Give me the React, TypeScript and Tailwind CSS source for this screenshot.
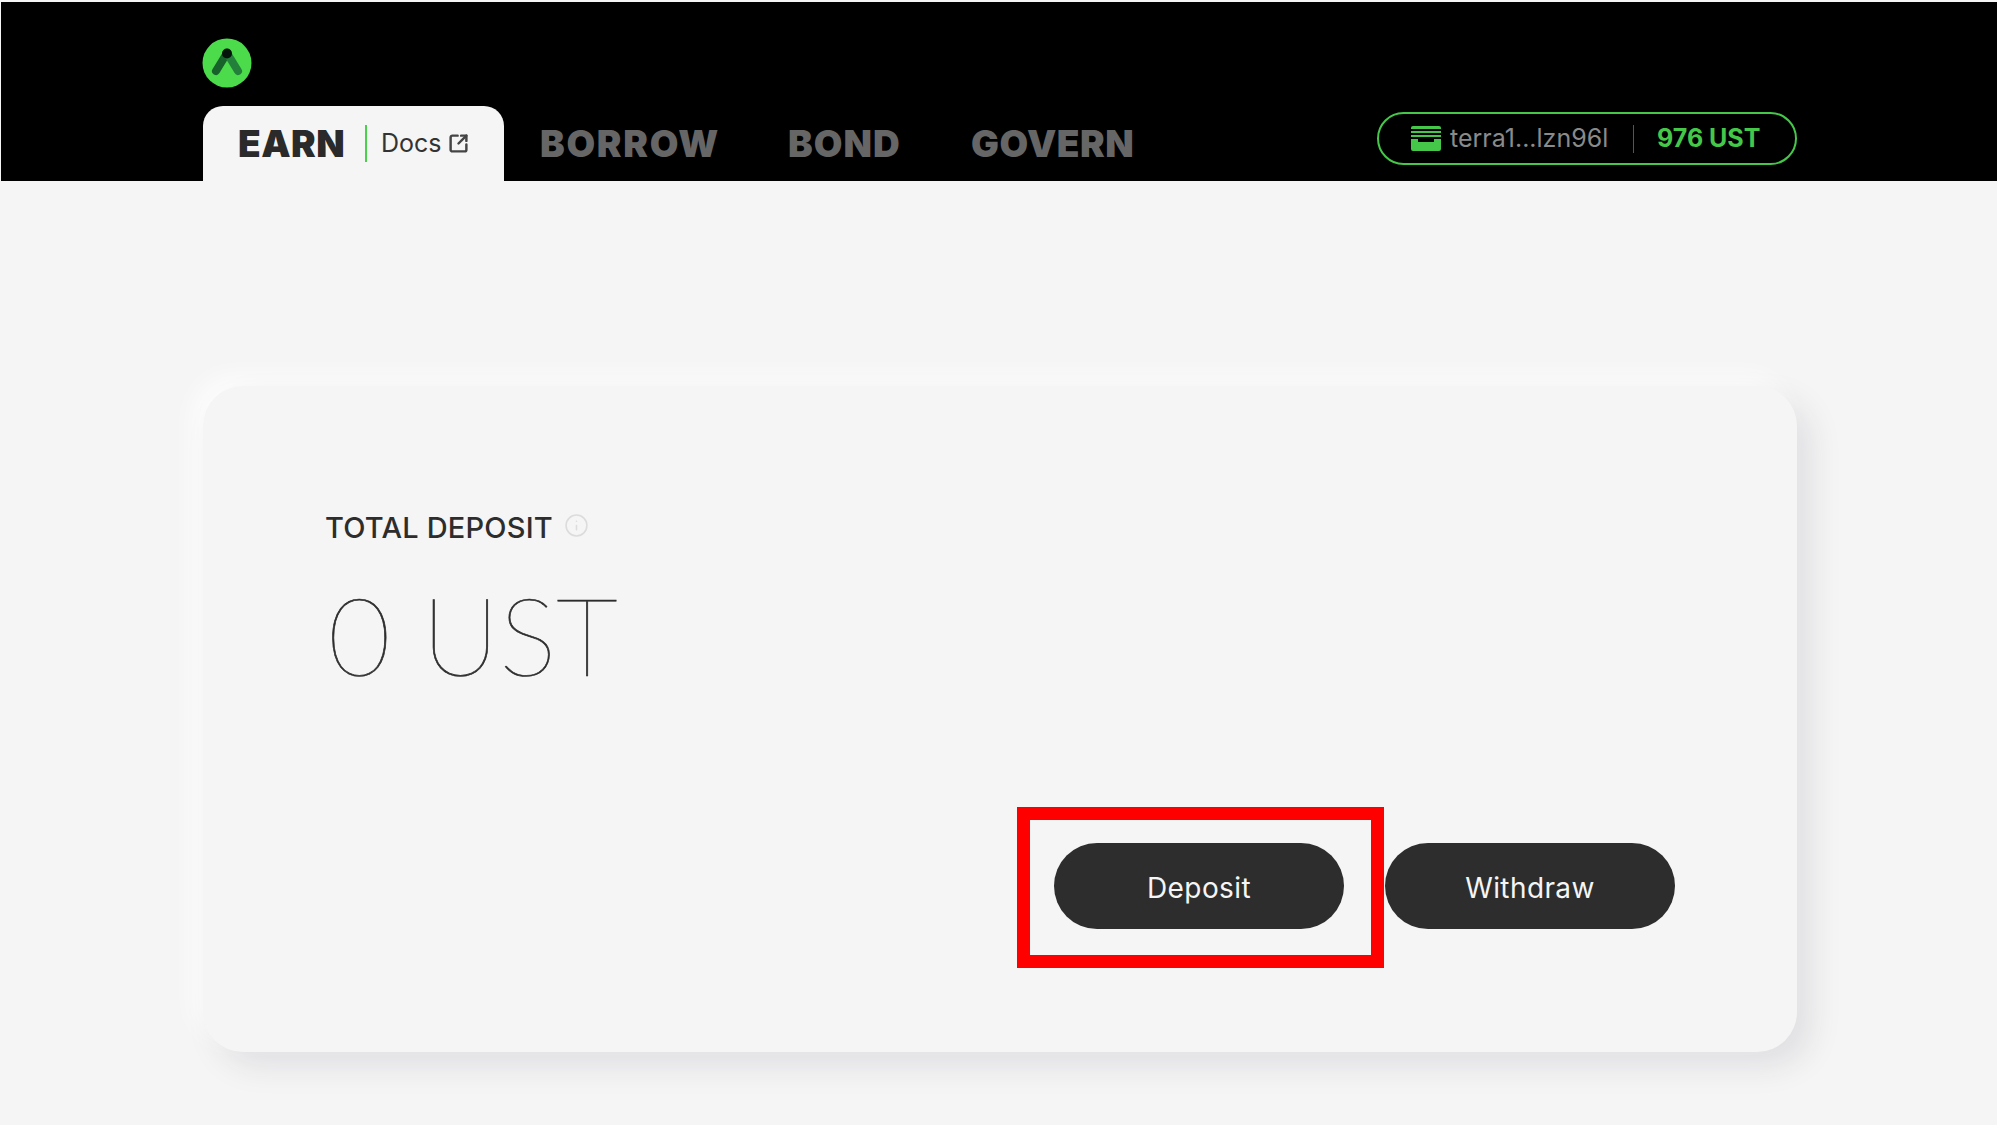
import React from 'react';
import { Info, SquareArrowOutUpRight } from 'lucide-react';

const NAV_ITEMS = [
  { label: 'BORROW', className: 'w-[177px] ml-[36px] tracking-[1.7px]' },
  { label: 'BOND', className: 'w-[112px] ml-[71px] tracking-[1px]' },
  { label: 'GOVERN', className: 'w-[163px] ml-[71px] tracking-[0.5px]' },
];

const Logo = () => (
  <svg width="50" height="50" viewBox="0 0 50 50" className="block">
    <circle cx="25" cy="25" r="24.5" fill="#4bdb4b" />
    <path d="M25 15 L14 33" stroke="#17612a" strokeWidth="8" strokeLinecap="round" />
    <path d="M25 15 L36 33" stroke="#23803a" strokeWidth="8" strokeLinecap="round" />
    <circle cx="25" cy="15.5" r="5" fill="#04140a" />
  </svg>
);

const WalletIcon = () => (
  <svg width="30" height="25" viewBox="0 0 30 25" className="block shrink-0">
    <path d="M2 0 H28 A2 2 0 0 1 30 2 V3 H0 V2 A2 2 0 0 1 2 0 Z" fill="#45c84a" />
    <rect x="0" y="5" width="30" height="2" fill="#45c84a" />
    <rect x="0" y="9" width="30" height="2" fill="#45c84a" />
    <path d="M0 13 H7 V16 H23 V13 H30 V23 A2 2 0 0 1 28 25 H2 A2 2 0 0 1 0 23 Z" fill="#45c84a" />
  </svg>
);

export default function App() {
  return (
    <div className="min-h-[1125px] bg-[#f5f5f5] pt-[2px] pl-px overflow-hidden font-['Inter',sans-serif]">
      {/* Header */}
      <header className="h-[179px] bg-black pl-[201px] pr-[200px] flex flex-col">
        <div className="pt-[36px] h-[104px]">
          <Logo />
        </div>
        <div className="flex items-stretch h-[75px]">
          <div className="ml-px w-[301px] bg-[#f5f5f5] rounded-t-[20px] flex items-center pl-[35px] pb-px">
            <span className="w-[107px] text-[37px] leading-none font-black text-[#2a2a2a] tracking-[0.5px]">EARN</span>
            <span className="ml-[20px] h-[37px] w-[2px] bg-[#4bd04b]" />
            <span className="ml-[14px] text-[25px] leading-none text-[#333]">Docs</span>
            <SquareArrowOutUpRight className="ml-[6px] text-[#444]" size={21} strokeWidth={2.8} />
          </div>
          {NAV_ITEMS.map((item) => (
            <span
              key={item.label}
              className={`${item.className} self-center pb-px text-[37px] leading-none font-black text-[#666] whitespace-nowrap`}
            >
              {item.label}
            </span>
          ))}
          <div className="ml-auto -mt-[72px] mb-[16px] self-end w-[420px] h-[53px] rounded-full border-2 border-[#45c84a] flex items-center pl-[32px]">
            <WalletIcon />
            <span className="ml-[9px] w-[156px] text-[25px] leading-none text-[#8a8a8a] whitespace-nowrap">terra1...lzn96l</span>
            <span className="ml-[27px] w-px h-[28px] bg-[#555]" />
            <span className="ml-[23px] text-[25px] leading-none font-bold text-[#45c84a] whitespace-nowrap">976 UST</span>
          </div>
        </div>
      </header>

      {/* Card */}
      <main className="pt-[205px] pl-[202px] pr-[200px]">
        <section className="relative h-[666px] rounded-[40px] bg-[#f5f5f5] pt-[129px] px-[122px] flex flex-col shadow-[14px_14px_32px_rgba(40,40,70,0.1),-10px_-10px_24px_rgba(255,255,255,0.8)]">
          <div className="flex items-center">
            <h2 className="text-[29px] leading-[26px] tracking-[0.2px] font-medium text-[#2d2d2d] whitespace-nowrap">TOTAL DEPOSIT</h2>
            <Info className="ml-[11px] -mt-[6px] text-[#dcdcdc]" size={25} strokeWidth={1.5} />
          </div>
          <p className="mt-[39px] ml-[3px] text-[108px] leading-[108px] font-thin font-['Lato',sans-serif] [-webkit-text-stroke:0.7px_#2d2d2d] text-[#2d2d2d] whitespace-nowrap">0 UST</p>
          <div className="mt-auto mb-[123px] flex justify-end gap-[41px]">
            <button className="w-[290px] h-[86px] rounded-full bg-[#2d2d2d] pt-[4px] text-[28px] tracking-[0.4px] font-normal text-[#f5f5f5]">Deposit</button>
            <button className="w-[290px] h-[86px] rounded-full bg-[#2d2d2d] pt-[4px] text-[28px] tracking-[0.4px] font-normal text-[#f5f5f5]">Withdraw</button>
          </div>
          {/* Red highlight */}
          <div className="absolute left-[814px] top-[421px] w-[367px] h-[161px] border-[13px] border-[#ff0000]" />
        </section>
      </main>
    </div>
  );
}
